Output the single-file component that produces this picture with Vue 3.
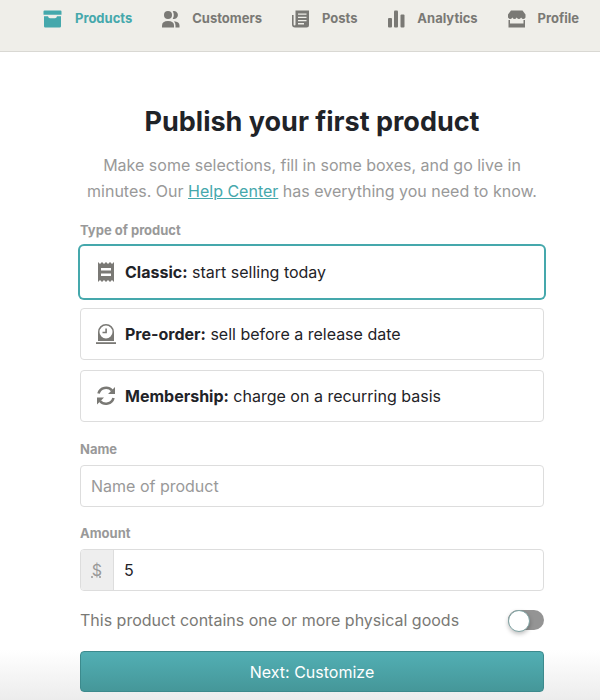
<script setup>
import { ref } from "vue";

const tabs = ["Products", "Customers", "Posts", "Analytics", "Profile"];
const activeTab = ref("Products");

const types = [
    { id: "classic", title: "Classic:", text: "start selling today" },
    { id: "preorder", title: "Pre-order:", text: "sell before a release date" },
    { id: "membership", title: "Membership:", text: "charge on a recurring basis" },
];
const productType = ref("classic");

const name = ref("");
const amount = ref("5");
const physical = ref(false);
</script>

<template>
    <div class="page">
        <header class="topbar">
            <nav class="tabs">
                <a
                    v-for="tab in tabs"
                    :key="tab"
                    href="#"
                    class="tab"
                    :class="{ active: tab === activeTab }"
                    @click.prevent="activeTab = tab"
                >
                    <svg v-if="tab === 'Products'" class="tab-icon wide" viewBox="0 0 20 18">
                        <path d="M1.5 .5h16a1 1 0 0 1 1 1v3.200h-18V1.500a1 1 0 0 1 1-1z" />
                        <path d="M1 6.200h4q.4 2 2 2h5q1.600 0 2-2h4v10a1.300 1.300 0 0 1-1.300 1.300H2.300A1.300 1.300 0 0 1 1 16.200z" />
                    </svg>
                    <svg v-else-if="tab === 'Customers'" class="tab-icon" viewBox="0 0 18 18">
                        <circle cx="6" cy="5" r="4" />
                        <path d="M0 17.500V15.500Q0 11 6 11t6 4.500V17.500z" />
                        <path d="M10.700 1.200a4 4 0 1 1 0 7.600q1.100-1.600 1.100-3.800T10.700 1.200z" />
                        <path d="M12 11.200Q17.500 11.500 17.500 15.500V17.500h-4V15.500q0-2.500-1.500-4.300z" />
                    </svg>
                    <svg v-else-if="tab === 'Posts'" class="tab-icon" viewBox="0 0 18 18">
                        <path fill-rule="evenodd" d="M3.500 .5h13.500v14.500a2.500 2.500 0 0 1-2.500 2.500H3a3 3 0 0 1-3-3V5h1.600v9.500q0 1 1 1t.9-1zM6 3.500v1.300h8.500V3.500zM6 6.700V8h8.500V6.700zM6 9.900v1.300h8.500V9.900zM6 13.100v1.300h6v-1.300z" />
                    </svg>
                    <svg v-else-if="tab === 'Analytics'" class="tab-icon" viewBox="0 0 18 18">
                        <rect x="1" y="8" width="4" height="9.5" rx="1" />
                        <rect x="7" y=".5" width="4" height="17" rx="1" />
                        <rect x="13.500" y="4.500" width="4" height="13" rx="1" />
                    </svg>
                    <svg v-else class="tab-icon" viewBox="0 0 18 18">
                        <path d="M3 .5h11.500l3 4v3q-1 1.500-2.200 1.500T13.100 7.500q-1 1.500-2.200 1.500T8.700 7.500q-1 1.500-2.200 1.500T4.400 7.500q-1 1.500-2.200 1.500T0 7.500v-3z" />
                        <path d="M.5 10H2v3.500h13.500V10H17v7.500H.5z" />
                    </svg>
                    <span>{{ tab }}</span>
                </a>
            </nav>
        </header>

        <main class="content">
            <form class="form" @submit.prevent>
                <h1>Publish your first product</h1>
                <p class="intro">
                    Make some selections, fill in some boxes, and go live in minutes. Our
                    <a href="#">Help Center</a> has everything you need to know.
                </p>

                <fieldset class="types">
                    <legend class="caption">Type of product</legend>
                    <div class="type-list">
                        <label
                            v-for="type in types"
                            :key="type.id"
                            class="type"
                            :class="{ selected: type.id === productType }"
                        >
                            <input v-model="productType" class="hidden-input" type="radio" name="type" :value="type.id" />
                            <svg v-if="type.id === 'classic'" class="type-icon" viewBox="0 0 20 20">
                                <path fill-rule="evenodd" d="M2 0l2 2 2-2 2 2 2-2 2 2 2-2 2 2 2-2v20l-2-2-2 2-2-2-2 2-2-2-2 2-2-2-2 2zM5 6v2.500h10V6zM5 11.500V14h10v-2.500z" />
                            </svg>
                            <svg v-else-if="type.id === 'preorder'" class="type-icon" viewBox="0 0 20 20">
                                <path fill-rule="evenodd" d="M2 17V8a8 8 0 0 1 16 0v9zM10 1.500a6.500 6.500 0 1 0 0 13 6.500 6.500 0 0 0 0-13z" />
                                <path d="M9.300 4.500h1.600v4.800H6.500V7.700h2.800z" />
                                <path d="M0 18.200h20V20H0z" />
                            </svg>
                            <svg v-else class="type-icon" viewBox="0 0 20 20">
                                <path d="M2.500 7.500a7.800 7.800 0 0 1 13.500-3M17.500 12a7.800 7.800 0 0 1-13.500 3" fill="none" stroke="currentColor" stroke-width="2.6" />
                                <path d="M19 1v7h-7zM1 18.500v-7h7z" />
                            </svg>
                            <span><strong>{{ type.title }}</strong> {{ type.text }}</span>
                        </label>
                    </div>
                </fieldset>

                <div class="field">
                    <label class="caption" for="name">Name</label>
                    <input id="name" v-model="name" class="box" type="text" placeholder="Name of product" />
                </div>

                <div class="field">
                    <label class="caption" for="amount">Amount</label>
                    <div class="box money">
                        <abbr class="currency" title="US dollars">$</abbr>
                        <input id="amount" v-model="amount" class="money-input" type="text" />
                    </div>
                </div>

                <label class="physical">
                    <span>This product contains one or more physical goods</span>
                    <input v-model="physical" class="switch" type="checkbox" />
                </label>

                <button class="next" type="submit">Next: Customize</button>
            </form>
        </main>
    </div>
</template>

<style>
body {
    background: #fff;
}
</style>

<style scoped>
.page {
    font-family: Inter, "Liberation Sans", sans-serif;
    font-size: 16px;
    color: #1f2328;
}

.page * {
    box-sizing: border-box;
}

.topbar {
    padding: 8px 21px 22px 43px;
    background: #efeee9;
    border-bottom: 1px solid #d9d8d3;
}

.tabs {
    display: flex;
    justify-content: space-between;
}

.tab {
    display: flex;
    align-items: center;
    gap: 12px;
    font-size: 13px;
    line-height: 21px;
    font-weight: 700;
    color: #7a7975;
    text-decoration: none;
}

.tab.active {
    color: #45a8ac;
}

.tab-icon {
    width: 18px;
    height: 18px;
    fill: currentColor;
}

.tab-icon.wide {
    width: 20px;
}

.content {
    padding: 53px 32px 8px 56px;
    background: linear-gradient(to top, #ececec, #fff 50px);
}

.form {
    max-width: 464px;
    margin: 0 auto;
}

h1 {
    margin: 0;
    font-size: 27px;
    line-height: 34px;
    font-weight: 700;
    text-align: center;
}

.intro {
    margin: 13px 0 18px;
    line-height: 26px;
    text-align: center;
    color: #999;
}

.intro a {
    color: #45a8ac;
}

.caption {
    display: block;
    padding: 0;
    font-size: 13px;
    line-height: 16px;
    font-weight: 700;
    color: #999;
}

.types {
    min-width: 0;
    margin: 0 0 19px;
    padding: 0;
    border: 0;
}

.type-list {
    display: grid;
    gap: 10px;
    padding-top: 8px;
}

.type {
    position: relative;
    display: flex;
    align-items: center;
    gap: 9px;
    height: 52px;
    padding: 0 15px;
    border: 1px solid #ddd;
    border-radius: 4px;
    cursor: pointer;
}

.type.selected {
    border-color: transparent;
    box-shadow: 0 0 0 2px #45a8ac;
}

.type strong {
    font-weight: 700;
}

.type-icon {
    flex: none;
    width: 20px;
    height: 20px;
    color: #7a7975;
    fill: currentColor;
}

/* 保留原生 radio，只是看不見 */
.hidden-input {
    position: absolute;
    opacity: 0;
}

.field + .field {
    margin-top: 18px;
}

.box {
    display: block;
    width: 100%;
    height: 42px;
    margin-top: 8px;
    padding: 0 10px;
    border: 1px solid #ddd;
    border-radius: 4px;
    background: #fff;
    font: inherit;
    color: inherit;
}

.box::placeholder {
    color: #999;
    opacity: 1;
}

.money {
    display: flex;
    padding: 0;
    overflow: hidden;
}

.currency {
    display: flex;
    align-items: center;
    justify-content: center;
    width: 33px;
    border-right: 1px solid #ddd;
    background: #eee;
    color: #999;
    text-decoration: underline dotted;
}

.money-input {
    flex: 1;
    min-width: 0;
    padding: 0 10px;
    border: 0;
    outline: 0;
    background: none;
    font: inherit;
    color: inherit;
}

.physical {
    display: flex;
    align-items: center;
    justify-content: space-between;
    margin: 16px 0 18px;
    line-height: 26px;
    color: #7a7975;
}

.switch {
    appearance: none;
    flex: none;
    width: 36px;
    height: 20px;
    margin: 0;
    border-radius: 10px;
    background: #949494;
    cursor: pointer;
}

.switch::before {
    content: "";
    display: block;
    width: 20px;
    height: 20px;
    border: 1px solid #7fa3a3;
    border-radius: 50%;
    background: #fff;
    box-shadow: 0 2px 4px rgba(0, 0, 0, 0.25);
}

.switch:checked {
    background: #45a8ac;
}

.switch:checked::before {
    margin-left: 16px;
}

.next {
    display: block;
    width: 100%;
    height: 41px;
    padding: 0;
    border: 1px solid #3c8a8d;
    border-radius: 4px;
    background: linear-gradient(#52afb4, #459799);
    font: inherit;
    color: #fff;
    cursor: pointer;
}
</style>
